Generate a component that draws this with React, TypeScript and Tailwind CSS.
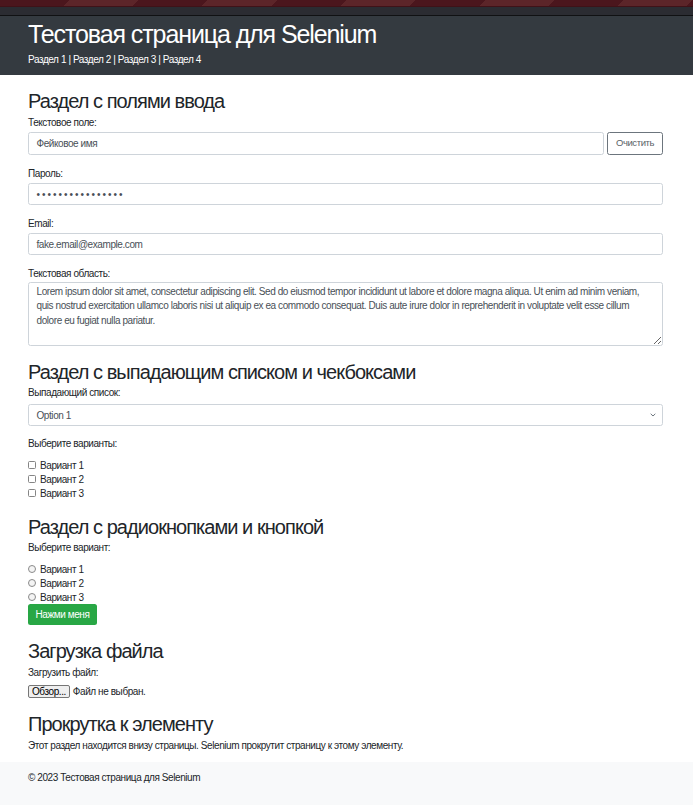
import React from "react";

const H2 = ({ children, className = "" }: { children: React.ReactNode; className?: string }) => (
  <h2 className={"text-[20px] leading-[24px] tracking-[-0.95px] font-normal text-[#212529] " + className}>{children}</h2>
);

const Label = ({ children, className = "" }: { children: React.ReactNode; className?: string }) => (
  <div className={"text-[10px] leading-[15px] tracking-[-0.42px] text-[#212529] " + className}>{children}</div>
);

const Field = ({ children, className = "" }: { children: React.ReactNode; className?: string }) => (
  <div
    className={
      "flex items-center h-[22px] px-[7.5px] border border-[#ced4da] rounded-[2.5px] bg-white text-[10px] tracking-[-0.42px] text-[#495057] " +
      className
    }
  >
    {children}
  </div>
);

const Check = ({ text }: { text: string }) => (
  <div className="flex items-center h-[13.7px] text-[10px] tracking-[-0.42px] text-[#212529]">
    <span className="w-[8px] h-[8px] border border-[#858585] rounded-[1.5px] bg-white mr-[4px] -mt-[1px]" />
    <span>{text}</span>
  </div>
);

const Radio = ({ text }: { text: string }) => (
  <div className="flex items-center h-[13.8px] text-[10px] tracking-[-0.42px] text-[#212529]">
    <span className="w-[8px] h-[8px] border border-[#8a8a8a] rounded-full bg-[#f4f4f4] mr-[4px] -mt-[1px]" />
    <span>{text}</span>
  </div>
);

export default function App() {
  return (
    <div className="min-h-[805px] bg-white font-[family-name:'Liberation_Sans',Arial,sans-serif] flex flex-col">
      {/* top strip */}
      <div className="h-[6px] bg-[repeating-linear-gradient(135deg,#4b161d_0px,#4b161d_49px,#5c2529_49px,#5c2529_98px)]" />
      <div className="h-[1px] bg-[#3f1218]" />
      <div className="h-[8px] bg-[#2b2c32]" />
      <div className="h-[1px] bg-[#101113]" />
      {/* header */}
      <header className="bg-[#343a40] pl-[28px] pr-[30px] pt-[3px] pb-[8px]">
        <h1 className="text-[25px] leading-[30px] tracking-[-1.1px] font-normal text-white">
          Тестовая страница для Selenium
        </h1>
        <nav className="mt-[3px] text-[10px] leading-[15px] tracking-[-0.42px] text-white">
          Раздел 1 | Раздел 2 | Раздел 3 | Раздел 4
        </nav>
      </header>

      <main className="pl-[28px] pr-[30px] pt-[14px]">
        {/* section 1 */}
        <section>
          <H2 className="mb-[2px]">Раздел с полями ввода</H2>
          <Label className="mb-[2px]">Текстовое поле:</Label>
          <div className="flex gap-[3px] mb-[11px]">
            <Field className="flex-1 h-[23px]">Фейковое имя</Field>
            <div className="w-[56px] h-[23px] flex items-center justify-center border border-[#6c757d] rounded-[2.5px] text-[9.5px] tracking-[-0.4px] text-[#5a6268]">
              Очистить
            </div>
          </div>
          <Label className="mb-[2px]">Пароль:</Label>
          <Field className="mb-[11px]">
            <span className="tracking-[2px] text-[10px] text-[#495057]">••••••••••••••••</span>
          </Field>
          <Label className="mb-[2px]">Email:</Label>
          <Field className="mb-[11px]">fake.email@example.com</Field>
          <Label className="mb-[1px]">Текстовая область:</Label>
          <textarea
            readOnly
            className="block w-full h-[64px] border border-[#ced4da] rounded-[2.5px] px-[7.5px] pt-[1.5px] text-[10px] leading-[14.5px] tracking-[-0.42px] text-[#495057] bg-white outline-none"
            defaultValue="Lorem ipsum dolor sit amet, consectetur adipiscing elit. Sed do eiusmod tempor incididunt ut labore et dolore magna aliqua. Ut enim ad minim veniam, quis nostrud exercitation ullamco laboris nisi ut aliquip ex ea commodo consequat. Duis aute irure dolor in reprehenderit in voluptate velit esse cillum dolore eu fugiat nulla pariatur."
          />
        </section>

        {/* section 2 */}
        <section className="mt-[14px]">
          <H2 className="mb-[1px]">Раздел с выпадающим списком и чекбоксами</H2>
          <Label className="mb-[4px]">Выпадающий список:</Label>
          <Field className="h-[21.5px] justify-between mb-[10px]">
            <span>Option 1</span>
            <svg width="6" height="4" viewBox="0 0 6 4" className="mr-[-1px]">
              <path d="M0.7 0.8 L3 3 L5.3 0.8" fill="none" stroke="#6c757d" strokeWidth="1" />
            </svg>
          </Field>
          <Label className="mb-[8px]">Выберите варианты:</Label>
          <Check text="Вариант 1" />
          <Check text="Вариант 2" />
          <Check text="Вариант 3" />
        </section>

        {/* section 3 */}
        <section className="mt-[14.5px]">
          <H2 className="mb-[1px]">Раздел с радиокнопками и кнопкой</H2>
          <Label className="mb-[8px]">Выберите вариант:</Label>
          <Radio text="Вариант 1" />
          <Radio text="Вариант 2" />
          <Radio text="Вариант 3" />
          <div className="w-[69px] h-[21.5px] flex items-center justify-center bg-[#28a745] rounded-[2.5px] text-[10px] tracking-[-0.42px] text-white">
            Нажми меня
          </div>
        </section>

        {/* section 4 */}
        <section className="mt-[14px]">
          <H2 className="mb-[2px]">Загрузка файла</H2>
          <Label className="mb-[5px]">Загрузить файл:</Label>
          <div className="flex items-center h-[13px] text-[10px] tracking-[-0.42px] text-[#212529]">
            <span className="h-[13px] px-[3px] flex items-center border border-[#767676] rounded-[2px] bg-[#efefef] text-black">
              Обзор...
            </span>
            <span className="ml-[3px]">Файл не выбран.</span>
          </div>
        </section>

        {/* section 5 */}
        <section className="mt-[13.5px]">
          <H2 className="mb-[2.5px]">Прокрутка к элементу</H2>
          <p className="text-[10px] leading-[15px] tracking-[-0.42px] text-[#212529]">
            Этот раздел находится внизу страницы. Selenium прокрутит страницу к этому элементу.
          </p>
        </section>
      </main>

      <footer className="mt-[8.5px] flex-1 bg-[#f8f9fa] pl-[28px] pr-[30px] pt-[8.5px] pb-[19px]">
        <p className="text-[10px] leading-[15px] tracking-[-0.42px] text-[#212529]">
          © 2023 Тестовая страница для Selenium
        </p>
      </footer>
    </div>
  );
}
